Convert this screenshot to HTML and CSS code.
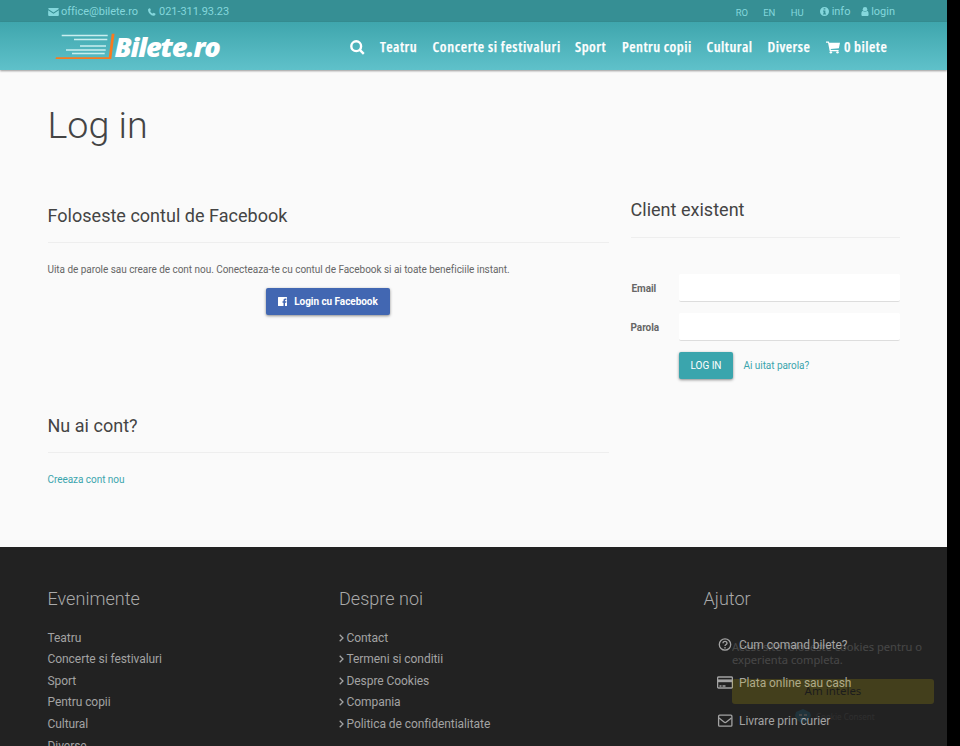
FILE: index.html
```html
<!DOCTYPE html>
<html lang="ro">
<head>
<meta charset="utf-8">
<title>Bilete.ro - Log in</title>
<link rel="stylesheet" href="styles.css">
</head>
<body>
<div class="page">
  <div class="topbar">
    <div class="contact">
      <svg class="i-mail" viewBox="0 0 12 9"><path d="M1 0h10a1 1 0 0 1 1 1L6 5.2 0 1a1 1 0 0 1 1-1zM0 2.4l6 4.1 6-4.1V8a1 1 0 0 1-1 1H1a1 1 0 0 1-1-1z"/></svg>
      <span class="mail">office@bilete.ro</span>
      <svg class="i-phone" viewBox="0 0 9 9"><path d="M.3 1.2C1 .3 1.8 0 2.300.2l1 2.100-.9 1c.7 1.500 1.600 2.400 3 3l1-.9 2 1.100c.3.6-.5 1.700-1.300 2.100C3.700 9.800-1 4.200.3 1.200z"/></svg>
      <span>021-311.93.23</span>
    </div>
    <div class="account">
      <span class="lang">RO</span><span class="lang">EN</span><span class="lang">HU</span>
      <svg class="i-info" viewBox="0 0 10 10"><path fill-rule="evenodd" d="M5 0a5 5 0 1 1 0 10A5 5 0 0 1 5 0zM4 1.300v1.500h2V1.300zM3.300 4v1H4v2.300h-.7v1h3.400v-1H6V4z"/></svg>
      <span class="info">info</span>
      <svg class="i-user" viewBox="0 0 8 10"><circle cx="4" cy="2.600" r="2.500"/><path d="M1.500 4.300C0 5 0 7 0 8.500 0 9.500.6 10 1.400 10h5.200C7.400 10 8 9.500 8 8.500 8 7 8 5 6.500 4.300c-1.500 1.600-3.500 1.600-5 0z"/></svg>
      <span>login</span>
    </div>
  </div>
  <header class="header">
    <svg class="logo" viewBox="0 0 166 32">
      <path class="speed" d="M6.700 3.500h46M19 7.500h33.300M25 14h26M11 18h39.700M17 21.500h32.700"/>
      <path class="swoosh" d="M1 25.200h52.800L56.700 1.700h2.800L56.300 27.100H.5z"/>
      <text x="59.500" y="25" textLength="105" lengthAdjust="spacingAndGlyphs">Bilete.ro</text>
    </svg>
    <nav class="nav">
      <svg class="i-search" viewBox="0 0 15 15"><circle cx="6.200" cy="6.200" r="4.900"/><path d="M9.800 9.800l4 4"/></svg>
      <a class="n1">Teatru</a><a class="n2">Concerte si festivaluri</a><a class="n3">Sport</a><a class="n4">Pentru copii</a><a class="n5">Cultural</a><a class="n6">Diverse</a>
      <svg class="i-cart" viewBox="0 0 15 13"><path d="M0 0h3l.5 1.500H15L13.800 7.200 5 8.200l.2 1h8.300v1.200H4L2.200 1.300H0z"/><circle cx="5.200" cy="11.700" r="1.300"/><circle cx="12.300" cy="11.700" r="1.300"/></svg>
      <a class="n7">0 bilete</a>
    </nav>
  </header>
  <main class="main">
    <h1>Log in</h1>
    <div class="columns">
      <div class="left">
        <section class="facebook">
          <h2>Foloseste contul de Facebook</h2>
          <p>Uita de parole sau creare de cont nou. Conecteaza-te cu contul de Facebook si ai toate beneficiile instant.</p>
          <button class="fb"><svg viewBox="0 0 9 9"><path d="M.5 0h8a.5.5 0 0 1 .5.5v8a.5.5 0 0 1-.5.5H7V5.700h1.200l.2-1.400H7v-.7c0-.5.2-.7.700-.7h.7V1.600H7.300c-1.200 0-1.800.7-1.800 1.800v.9H4.500v1.400h1V9h-5a.5.5 0 0 1-.5-.5v-8A.5.5 0 0 1 .5 0z"/></svg>Login cu Facebook</button>
        </section>
        <section>
          <h2>Nu ai cont?</h2>
          <a class="link">Creeaza cont nou</a>
        </section>
      </div>
      <section class="right">
        <h2>Client existent</h2>
        <form>
          <div class="field"><label class="email" for="email">Email</label><input id="email" type="text"></div>
          <div class="field"><label for="parola">Parola</label><input id="parola" type="password"></div>
          <div class="actions"><button class="login" type="button">LOG IN</button><a class="link">Ai uitat parola?</a></div>
        </form>
      </section>
    </div>
  </main>
  <footer class="footer">
    <div class="events"><h3>Evenimente</h3>
      <ul><li>Teatru</li><li>Concerte si festivaluri</li><li>Sport</li><li>Pentru copii</li><li>Cultural</li><li>Diverse</li></ul>
    </div>
    <div class="about"><h3>Despre noi</h3>
      <ul>
        <li><svg viewBox="0 0 5 8"><path d="M.7.700L4 4 .7 7.300"/></svg>Contact</li>
        <li><svg viewBox="0 0 5 8"><path d="M.7.700L4 4 .7 7.300"/></svg>Termeni si conditii</li>
        <li><svg viewBox="0 0 5 8"><path d="M.7.700L4 4 .7 7.300"/></svg>Despre Cookies</li>
        <li><svg viewBox="0 0 5 8"><path d="M.7.700L4 4 .7 7.300"/></svg>Compania</li>
        <li><svg viewBox="0 0 5 8"><path d="M.7.700L4 4 .7 7.300"/></svg>Politica de confidentialitate</li>
      </ul>
    </div>
    <div class="help"><h3>Ajutor</h3>
      <ul>
        <li><svg viewBox="0 0 16 14"><circle cx="8" cy="6.500" r="5.700"/><path class="q" d="M6 5.200c0-2.500 4-2.500 4 0C10 6.500 8 6.500 8 8M8 9v1.500"/></svg>Cum comand bilete?</li>
        <li><svg viewBox="0 0 16 14"><rect x=".6" y="1" width="14.800" height="11" rx="1"/><path class="band" d="M1 3.400h14v2.800H1z"/><path d="M2.500 10h2M5.500 10h3"/></svg>Plata online sau cash</li>
        <li><svg viewBox="0 0 16 14"><rect x="1.600" y="1.200" width="13.300" height="11" rx="1"/><path d="M2 4.100l5 4q1.200 1 2.400 0l5-4"/></svg>Livrare prin curier</li>
      </ul>
    </div>
  </footer>
  <aside class="consent">
    <p>Acest site foloseste cookies pentru o experienta completa.</p>
    <div class="ok">Am inteles</div>
    <div class="brand"><svg viewBox="0 0 16 14"><path d="M8 0l7 3.500L16 7l-4 5-4 2-5-2-3-5 1-4z"/><path class="face" d="M4 5h3v2H4zM9 5h3v2H9zM5 9h6v1H5z"/></svg><span>Cookie Consent</span></div>
  </aside>
</div>
</body>
</html>
```
FILE: styles.css
```css
* { box-sizing: border-box; }
body { margin: 0; background: #000; font: 10px/14px Roboto, sans-serif; color: #666; height: 746px; overflow: hidden; }
.page { width: 947px; height: 746px; overflow: hidden; background: #fafafa; }
h1, h2, h3, p, ul { margin: 0; padding: 0; font-weight: 400; list-style: none; }
svg { display: block; flex: none; }
.topbar { height: 22px; background: #368f94; color: #84d7dc; display: flex; justify-content: space-between; padding: 1px 52px 0 47.500px; font-size: 11px; line-height: 22px; }
.topbar svg { fill: currentColor; }
.contact, .account { display: flex; align-items: center; white-space: nowrap; }
.contact { letter-spacing: -.04px; }
.i-mail { width: 11px; height: 8px; margin-right: 2.500px; }
.mail { width: 77px; margin-right: 10px; }
.i-phone { width: 8px; height: 8px; margin-right: 3px; }
.lang { font-size: 9.500px; width: 27.500px; padding-top: 2px; }
.i-info { width: 9px; height: 9px; margin: 0 3px 0 1.500px; }
.info { width: 28px; }
.i-user { width: 8px; height: 9px; margin: 0 2.500px 0 1px; }
.header { height: 48px; background: linear-gradient(#3fa6ad, #5fc1ca); box-shadow: 0 1px 2px rgba(0,0,0,.4); display: flex; position: relative; }
.logo { width: 166px; height: 32px; margin: 10px 0 0 55px; overflow: visible; }
.speed { stroke: #c9eeef; stroke-width: 1.300; }
.swoosh { fill: #f97a1f; }
.logo text { font: italic 800 27px "Open Sans", sans-serif; fill: #fff; letter-spacing: -1.200px; }
.nav { display: flex; align-items: center; margin-left: 129px; height: 50px; color: #fff; white-space: nowrap; }
.nav a { font: 600 14.500px "Open Sans", sans-serif; font-stretch: 75%; letter-spacing: .48px; position: relative; top: -1px; -webkit-text-stroke: .25px #fff; }
.i-search { width: 15px; height: 15px; margin-right: 15px; fill: none; stroke: #fff; stroke-width: 2.400; }
.n1 { width: 52.500px; }
.nav .n2 { width: 142.500px; letter-spacing: .62px; }
.n3 { width: 47px; }
.n4 { width: 84.500px; }
.n5 { width: 61px; }
.n6 { width: 58.500px; }
.i-cart { width: 14px; height: 13px; fill: #fff; margin-right: 4px; }
.main { height: 477px; padding: 33px 47px 0 47.500px; }
h1 { font-size: 37.700px; line-height: 44px; font-weight: 300; color: #444; }
.columns { display: flex; gap: 22px; margin-top: 51px; }
.left { width: 561px; padding-top: 2px; }
.right { width: 269.500px; }
h2 { font-size: 18px; line-height: 24px; color: #444; padding-bottom: 15px; border-bottom: 1px solid #eee; white-space: nowrap; letter-spacing: .02px; }
.left h2 { padding-top: 7px; line-height: 18px; padding-bottom: 17px; }
.facebook { height: 210px; }
.facebook p { letter-spacing: -.04px; margin-top: 20px; white-space: nowrap; }
.left h2 + .link { display: block; margin-top: 20px; }
.fb { display: flex; align-items: center; justify-content: center; width: 124px; height: 27px; margin: 11px auto 0; border: 0; border-radius: 2px; padding: 0; background: #4267b2; color: #fff; font: 700 10px Roboto, sans-serif; letter-spacing: -.05px; box-shadow: 0 1px 3px rgba(0,0,0,.45); }
.fb svg { width: 9px; height: 9px; fill: #fff; margin-right: 7px; }
.link { color: #3aa5ad; letter-spacing: -.05px; }
form { padding-top: 36px; }
.field { display: flex; align-items: center; height: 28px; margin-bottom: 11px; }
.field label { width: 48.500px; font-size: 10px; letter-spacing: -.05px; font-weight: 700; padding-top: 2px; }
.field .email { padding-left: 1px; }
.field input { width: 221px; height: 28px; border: 0; border-bottom: 1px solid #ddd; border-radius: 2px; background: #fff; padding: 0 8px; }
.actions { display: flex; align-items: center; padding-left: 48.500px; gap: 10.500px; }
.login { width: 54px; height: 27px; border: 0; border-radius: 2px; padding: 0; background: #3aa5ad; color: #fff; font: 10px Roboto, sans-serif; letter-spacing: -.05px; box-shadow: 0 1px 3px rgba(0,0,0,.45); }
.footer { height: 199px; background: #222; color: #a3a3a3; display: flex; padding: 40px 0 0 47.500px; overflow: hidden; }
h3 { font-size: 18px; line-height: 24px; font-weight: 300; color: #aaa; margin-bottom: 15px; letter-spacing: .03px; }
.events { width: 291.500px; }
.about { width: 364.500px; }
.footer li { display: flex; align-items: center; height: 21.600px; font-size: 12px; letter-spacing: -.06px; white-space: nowrap; }
.events ul, .about ul { padding-top: .8px; }
.footer svg { fill: none; stroke: currentColor; stroke-width: 1.300; }
.about svg { width: 5px; height: 8px; margin-right: 2.500px; }
.help ul { padding: 0 0 0 13.500px; }
.help li { height: 38px; }
.help svg { width: 16px; height: 14px; margin-right: 6px; }
.help .band { fill: currentColor; stroke: none; }
.consent { position: absolute; left: 732px; top: 640px; width: 202px; opacity: .16; color: #fff; font: 11.150px/13px "Noto Sans", sans-serif; }
.ok { height: 25px; margin-top: 13px; border-radius: 3px; background: #f1d600; color: #000; text-align: center; font-size: 11.500px; line-height: 24px; }
.brand { display: flex; align-items: center; margin: 5px 0 0 63px; font-size: 8px; }
.brand svg { width: 16px; height: 14px; fill: #1b8bc0; margin-right: 5px; }
.brand .face { fill: #fff; }
.brand span { opacity: .35; }
```
